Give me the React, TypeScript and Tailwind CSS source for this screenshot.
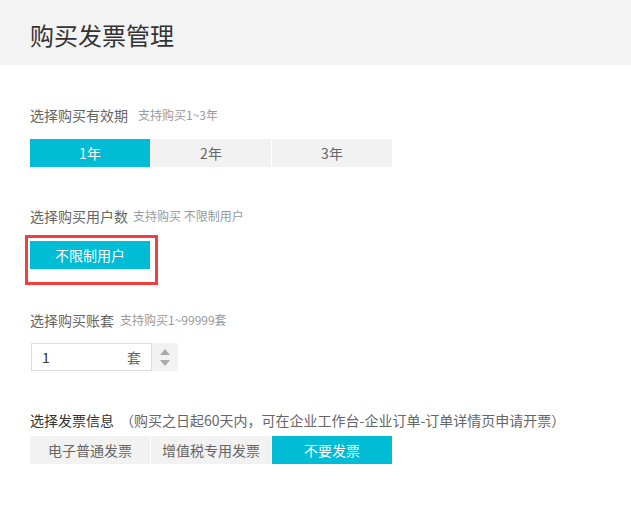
import { useState } from 'react';

const font = { fontFamily: '"Noto Sans CJK SC", "Noto Sans", sans-serif' };

function Seg({ items, active, onPick }: { items: string[]; active: number; onPick: (i: number) => void }) {
  return (
    <div className="flex gap-[1px]">
      {items.map((t, i) => (
        <button
          key={t}
          onClick={() => onPick(i)}
          className={`w-[120px] h-[28px] text-[14px] leading-[28px] ${
            i === active ? 'bg-[#00bcd4] text-white' : 'bg-[#f2f2f2] text-[#666]'
          }`}
        >
          {t}
        </button>
      ))}
    </div>
  );
}

export default function App() {
  const [years, setYears] = useState(0);
  const [invoice, setInvoice] = useState(2);
  const [count, setCount] = useState(1);

  return (
    <div className="w-[631px] h-[510px] bg-white" style={font}>
      <div className="h-[65px] bg-[#f3f3f3] pl-[30px] flex items-center">
        <h1 className="text-[24px] text-[#333] leading-none pt-[5px]">购买发票管理</h1>
      </div>

      <div className="pl-[30px] pt-[40px]">
        {/* 有效期 */}
        <div className="h-5 flex items-center">
          <span className="text-[14px] text-[#666]">选择购买有效期</span>
          <span className="text-[12px] text-[#999] ml-[10px]">支持购买1~3年</span>
        </div>
        <div className="mt-[14px]">
          <Seg items={['1年', '2年', '3年']} active={years} onPick={setYears} />
        </div>

        {/* 用户数 */}
        <div className="h-5 flex items-center mt-[39px]">
          <span className="text-[14px] text-[#666]">选择购买用户数</span>
          <span className="text-[12px] text-[#999] ml-[5px]">支持购买 不限制用户</span>
        </div>
        <div className="mt-[15px] relative w-[120px]">
          <div className="w-[120px] h-[28px] bg-[#00bcd4] text-white text-[14px] leading-[28px] text-center">
            不限制用户
          </div>
          <div className="absolute left-[-5px] top-[-6px] w-[133px] h-[50px] border-[3px] border-[#f43f3f]" />
        </div>

        {/* 账套 */}
        <div className="h-5 flex items-center mt-[41px]">
          <span className="text-[14px] text-[#666]">选择购买账套</span>
          <span className="text-[12px] text-[#999] ml-[6px]">支持购买1~99999套</span>
        </div>
        <div className="mt-[13px] flex">
          <div className="w-[121px] h-[28px] border border-[#ddd] flex items-center px-[10px] ml-[1px]">
            <input
              value={count}
              onChange={e => setCount(Number(e.target.value.replace(/\D/g, '')) || 1)}
              className="flex-1 w-0 outline-none text-[14px] text-[#333] bg-transparent"
            />
            <span className="text-[14px] text-[#666]">套</span>
          </div>
          <div className="w-[26px] h-[28px] bg-[#f2f2f2] flex flex-col items-center justify-center gap-[5px]">
            <button onClick={() => setCount(c => Math.min(99999, c + 1))} className="w-0 h-0 border-l-[5px] border-r-[5px] border-b-[6px] border-l-transparent border-r-transparent border-b-[#aaa]" />
            <button onClick={() => setCount(c => Math.max(1, c - 1))} className="w-0 h-0 border-l-[5px] border-r-[5px] border-t-[6px] border-l-transparent border-r-transparent border-t-[#aaa]" />
          </div>
        </div>

        {/* 发票 */}
        <div className="h-5 flex items-center mt-[39px]">
          <span className="text-[14px] text-[#333]">选择发票信息</span>
          <span className="text-[14px] text-[#666] ml-[6px]">（购买之日起60天内，可在企业工作台-企业订单-订单详情页申请开票）</span>
        </div>
        <div className="mt-[6px]">
          <Seg items={['电子普通发票', '增值税专用发票', '不要发票']} active={invoice} onPick={setInvoice} />
        </div>
      </div>
    </div>
  );
}
